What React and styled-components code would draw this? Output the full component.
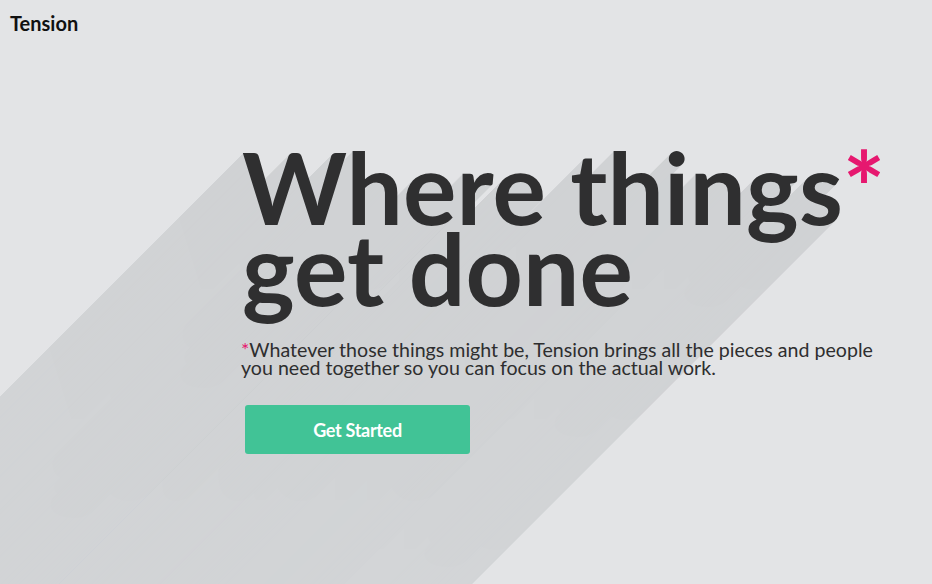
import styled, { createGlobalStyle } from "styled-components";

const SHADOW_COLOR = [208, 210, 212];

// long flat shadow falling down-left from the heading
const longShadow = Array.from({ length: 520 }, (_, i) => {
  const n = i + 1;
  const t = n / 520;
  const [r, g, b] = SHADOW_COLOR.map((c) => Math.round(c + t * 4));
  return `-${n}px ${n}px 0 rgb(${r}, ${g}, ${b})`;
}).join(", ");

const GlobalStyle = createGlobalStyle`
  html, body {
    margin: 0;
    padding: 0;
    height: 100%;
    overflow: hidden;
  }
  body {
    background: #e3e4e6;
    font-family: Lato, "Open Sans", sans-serif;
    color: #333;
  }
`;

const Page = styled.div`
  width: 932px;
  height: 584px;
  overflow: hidden;
  display: flex;
  flex-direction: column;
`;

const TopBar = styled.header`
  padding: 10px 10px 0;
  font-size: 20px;
  font-weight: 700;
  color: #111;
  line-height: 26px;
`;

const Hero = styled.main`
  padding: 110px 0 0 241px;
  display: flex;
  flex-direction: column;
  align-items: flex-start;
`;

const Heading = styled.h1`
  margin: 0 0 0 1px;
  font-size: 100px;
  font-weight: 700;
  line-height: 81px;
  color: #2f2f30;
  letter-spacing: 0.1px;
  text-shadow: ${longShadow};
`;

const Star = styled.span`
  color: #e6186f;
  text-shadow: none;
`;

const Lead = styled.p`
  margin: 33px 0 0;
  font-size: 19.6px;
  line-height: 18px;
  color: #2e2e2f;
  max-width: 650px;
`;

const Button = styled.button`
  margin: 28px 0 0 4px;
  width: 225px;
  height: 49px;
  border: none;
  border-radius: 3px;
  background: #41c396;
  color: #fff;
  font-family: Lato, sans-serif;
  font-size: 18px;
  font-weight: 700;
  letter-spacing: -0.3px;
  cursor: pointer;
`;

export default function App() {
  return (
    <>
      <GlobalStyle />
      <Page>
        <TopBar>Tension</TopBar>
        <Hero>
          <Heading>
            Where things<Star>*</Star>
            <br />
            get done
          </Heading>
          <Lead>
            <Star>*</Star>Whatever those things might be, Tension brings all the
            pieces and people you need together so you can focus on the actual
            work.
          </Lead>
          <Button>Get Started</Button>
        </Hero>
      </Page>
    </>
  );
}
